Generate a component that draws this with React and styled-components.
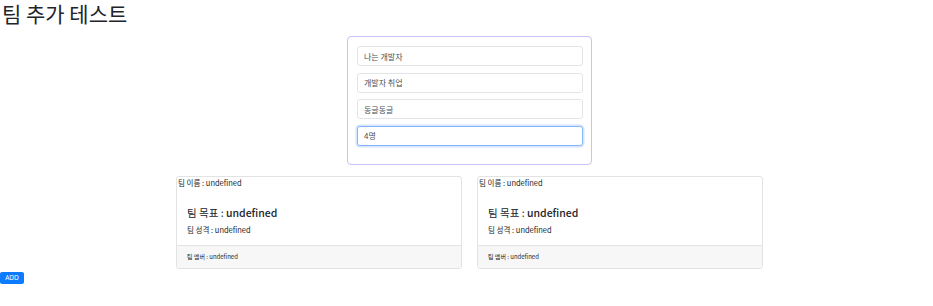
import React from "react";
import styled, { createGlobalStyle } from "styled-components";

const Global = createGlobalStyle`
  html, body { margin: 0; padding: 0; background: #fff; }
  body { font-family: "Noto Sans CJK KR", "Noto Sans", sans-serif; color: #212529; }
  * { box-sizing: border-box; }
`;

const Title = styled.h1`
  margin: 0;
  font-size: 21px;
  font-weight: 400;
  line-height: 26px;
  padding-left: 2px;
  color: #212529;
`;

const Main = styled.div`
  display: flex;
  flex-direction: column;
  align-items: center;
  padding-left: 6px;
`;

const FormBox = styled.form`
  margin-top: 10px;
  width: 245px;
  border: 1px solid #c8c2f6;
  border-radius: 4px;
  padding: 9px 8px 18px 9px;
  display: flex;
  flex-direction: column;
  gap: 6.5px;
`;

const Input = styled.input`
  width: 226px;
  height: 20px;
  padding: 0 6px;
  border: 1px solid ${(p) => (p.$focus ? "#86b7fe" : "#e2e4e7")};
  border-radius: 3px;
  box-shadow: ${(p) => (p.$focus ? "0 0 0 1.5px rgba(13,110,253,0.18)" : "none")};
  font-family: "Noto Sans CJK KR", sans-serif;
  font-size: 8px;
  color: #495057;
  outline: none;
  background: #fff;
`;

const CardRow = styled.div`
  margin-top: 11px;
  display: flex;
  gap: 15px;
`;

const Card = styled.div`
  width: 286px;
  height: 93px;
  border: 1px solid #e3e3e3;
  border-radius: 3px;
  display: flex;
  flex-direction: column;
  overflow: hidden;
`;

const CardHeader = styled.div`
  height: 14px;
  font-size: 7.5px;
  line-height: 12px;
  color: #212529;
  padding-left: 1px;
`;

const CardBody = styled.div`
  flex: 1;
  padding: 14px 10px 0 10px;
  display: flex;
  flex-direction: column;
  gap: 4px;
`;

const CardTitle = styled.div`
  font-size: 10.5px;
  line-height: 15px;
  color: #212529;
  span { font-weight: 500; }
`;

const CardText = styled.div`
  font-size: 7.5px;
  line-height: 12px;
  color: #212529;
`;

const CardFooter = styled.div`
  height: 23px;
  background: #f7f7f7;
  border-top: 1px solid #e3e3e3;
  padding: 0 10px;
  font-size: 6px;
  line-height: 22px;
  color: #212529;
`;

const AddButton = styled.button`
  display: block;
  margin-top: 3px;
  width: 24px;
  height: 12px;
  padding: 0;
  border: none;
  border-radius: 2px;
  background: #0d7bff;
  color: #fff;
  font-family: "Noto Sans", sans-serif;
  font-size: 6.5px;
  line-height: 12px;
`;

const teams = [0, 1];

export default function App() {
  return (
    <>
      <Global />
      <Title>팀 추가 테스트</Title>
      <Main>
        <FormBox onSubmit={(e) => e.preventDefault()}>
          <Input defaultValue="나는 개발자" />
          <Input defaultValue="개발자 취업" />
          <Input defaultValue="동글동글" />
          <Input defaultValue="4명" $focus />
        </FormBox>
        <CardRow>
          {teams.map((t) => (
            <Card key={t}>
              <CardHeader>팀 이름 : undefined</CardHeader>
              <CardBody>
                <CardTitle>
                  팀 목표 : <span>undefined</span>
                </CardTitle>
                <CardText>팀 성격 : undefined</CardText>
              </CardBody>
              <CardFooter>팀 멤버 : undefined</CardFooter>
            </Card>
          ))}
        </CardRow>
      </Main>
      <AddButton>ADD</AddButton>
    </>
  );
}
